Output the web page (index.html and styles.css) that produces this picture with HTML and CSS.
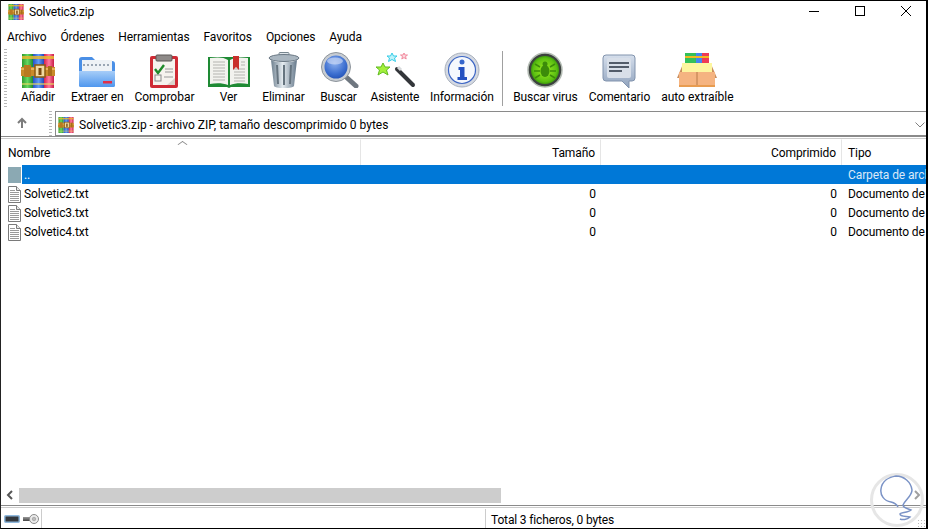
FILE: index.html
```html
<!DOCTYPE html>
<html lang="es">
<head>
<meta charset="utf-8">
<title>Solvetic3.zip</title>
<link rel="stylesheet" href="styles.css">
</head>
<body>
<svg class="defs" width="0" height="0" aria-hidden="true">
  <defs>
    <linearGradient id="gGreen" x1="0" x2="1" y1="0" y2="0"><stop offset="0" stop-color="#2e9a2e"/><stop offset=".5" stop-color="#66d860"/><stop offset="1" stop-color="#1f8a30"/></linearGradient>
    <linearGradient id="gBlue" x1="0" x2="1" y1="0" y2="0"><stop offset="0" stop-color="#2850c8"/><stop offset=".5" stop-color="#5f9cf6"/><stop offset="1" stop-color="#2448b8"/></linearGradient>
    <linearGradient id="gRed" x1="0" x2="1" y1="0" y2="0"><stop offset="0" stop-color="#d8204c"/><stop offset=".5" stop-color="#ff7ca0"/><stop offset="1" stop-color="#c81c48"/></linearGradient>
    <linearGradient id="gFolder" x1="0" x2="0" y1="0" y2="1"><stop offset="0" stop-color="#a7cdf8"/><stop offset="1" stop-color="#4f97ee"/></linearGradient>
    <linearGradient id="gCan" x1="0" x2="1" y1="0" y2="0"><stop offset="0" stop-color="#6d7f8e"/><stop offset=".45" stop-color="#e4ebf0"/><stop offset="1" stop-color="#65788a"/></linearGradient>
    <radialGradient id="gLens" cx=".45" cy=".35" r=".7"><stop offset="0" stop-color="#8cb0ee"/><stop offset=".6" stop-color="#3d6fd0"/><stop offset="1" stop-color="#1b49ae"/></radialGradient>
    <radialGradient id="gVirus" cx=".5" cy=".5" r=".55"><stop offset="0" stop-color="#a0f020"/><stop offset=".75" stop-color="#5cc012"/><stop offset="1" stop-color="#2f8a08"/></radialGradient>
    <linearGradient id="gBubble" x1="0" x2="0" y1="0" y2="1"><stop offset="0" stop-color="#d6dfec"/><stop offset="1" stop-color="#8fa2bd"/></linearGradient>
    <linearGradient id="gKey" x1="0" x2="0" y1="0" y2="1"><stop offset="0" stop-color="#9a9a9a"/><stop offset="1" stop-color="#444"/></linearGradient>
    <symbol id="rar" viewBox="0 0 34 34">
      <rect x="1" y="0" width="11" height="34" fill="url(#gGreen)"/>
      <rect x="12" y="0" width="11" height="34" fill="url(#gBlue)"/>
      <rect x="23" y="0" width="10" height="34" fill="url(#gRed)"/>
      <rect x="1" y="2" width="32" height="3" fill="#e8b830" opacity=".85"/>
      <rect x="1" y="29" width="32" height="2" fill="#e8d860" opacity=".6"/>
      <rect x="0" y="13" width="34" height="9" fill="#c98a2a"/>
      <rect x="0" y="14" width="34" height="2" fill="#e8b45a"/>
      <rect x="3" y="11" width="7" height="12" fill="#b87a20"/>
      <rect x="14" y="11" width="10" height="12" fill="#f0d9a0" stroke="#8a5a10" stroke-width="1.5"/>
      <rect x="17.5" y="14" width="3" height="7" fill="#7a4a10"/>
      <rect x="27" y="12" width="4" height="10" fill="#a86c18"/>
    </symbol>
    <symbol id="doc" viewBox="0 0 13 17">
      <path d="M.5.5h8l4 4v12H.5z" fill="#fff" stroke="#7a7a7a"/>
      <path d="M8.500.5v4h4" fill="#e8e8e8" stroke="#7a7a7a"/>
      <path d="M2 4.500h5M2 6.500h9M2 8.500h9M2 10.500h9M2 12.500h9M2 14.500h9" stroke="#9a9a9a"/>
    </symbol>
  </defs>
</svg>

<div class="window">
  <header class="titlebar">
    <svg class="title-icon"><use href="#rar"/></svg>
    <span class="title-text">Solvetic3.zip</span>
    <div class="caption">
      <svg class="cap" viewBox="0 0 46 20"><path d="M18 10.500h10" stroke="#000" fill="none"/></svg>
      <svg class="cap" viewBox="0 0 46 20"><rect x="18.500" y="5.500" width="9" height="9" stroke="#000" fill="none"/></svg>
      <svg class="cap" viewBox="0 0 46 20"><path d="M18 5l10 10M28 5L18 15" stroke="#000" fill="none"/></svg>
    </div>
  </header>

  <nav class="menubar">
    <span class="menu-item">Archivo</span>
    <span class="menu-item">Órdenes</span>
    <span class="menu-item">Herramientas</span>
    <span class="menu-item">Favoritos</span>
    <span class="menu-item">Opciones</span>
    <span class="menu-item">Ayuda</span>
  </nav>

  <div class="toolbar">
    <div class="gripper"></div>
    <div class="tools">
      <div class="tool tool-add">
        <svg class="tool-icon" viewBox="0 0 44 36"><use href="#rar" x="5" y="2" width="34" height="34"/></svg>
        <span>Añadir</span>
      </div>
      <div class="tool tool-extract">
        <svg class="tool-icon" viewBox="0 0 44 36">
          <path d="M4 8a3 3 0 0 1 3-3h10l4 4h16a3 3 0 0 1 3 3v21a2 2 0 0 1-2 2H6a2 2 0 0 1-2-2z" fill="#4a8fe6"/>
          <rect x="7" y="8" width="30" height="13" fill="#eef2f6"/>
          <path d="M8 13h28" stroke="#9aa6b4" stroke-dasharray="2 2" stroke-width="2"/>
          <path d="M4 19h36v14a2 2 0 0 1-2 2H6a2 2 0 0 1-2-2z" fill="url(#gFolder)"/>
          <rect x="28" y="29" width="9" height="2.500" fill="#e0304a"/>
        </svg>
        <span>Extraer en</span>
      </div>
      <div class="tool tool-test">
        <svg class="tool-icon" viewBox="0 0 44 36">
          <rect x="8" y="4" width="28" height="32" rx="2" fill="#cf2b35"/>
          <rect x="11" y="7" width="22" height="26" fill="#f6f3ee"/>
          <rect x="14" y="3" width="16" height="6" rx="1" fill="#8e8a88" stroke="#5a5654"/>
          <path d="M13 17l3 4 6-8" stroke="#1f8a2a" stroke-width="2.400" fill="none"/>
          <path d="M23 17h8M23 20h8M22 25h9" stroke="#9a9a9a"/>
          <rect x="13" y="23" width="6" height="6" fill="none" stroke="#8a8a8a"/>
          <path d="M25 33l8-7v7z" fill="#d9d4cc"/>
        </svg>
        <span>Comprobar</span>
      </div>
      <div class="tool tool-view">
        <svg class="tool-icon" viewBox="0 0 44 36">
          <path d="M1 5h42v30H24l-2 1-2-1H1z" fill="#1e8a34"/>
          <path d="M3 6c7-1 14-1 18 2v25c-5-2-12-2-18-1z" fill="#f2f2ee"/>
          <path d="M41 6c-7-1-14-1-18 2v25c5-2 12-2 18-1z" fill="#f2f2ee"/>
          <path d="M6 10h12M6 13h12M6 16h12M6 19h12M6 22h12M6 25h12M6 28h12M27 17h11M27 20h11M27 23h11M27 26h11M27 29h11M34 10h4M34 13h4" stroke="#b4b4b0"/>
          <path d="M26 4h6v14l-3-3-3 3z" fill="#c8302c"/>
        </svg>
        <span>Ver</span>
      </div>
      <div class="tool tool-delete">
        <svg class="tool-icon" viewBox="0 0 44 36">
          <rect x="17" y=".5" width="10" height="3" rx="1" fill="#dfe5ea" stroke="#77868f"/>
          <ellipse cx="22" cy="6" rx="15" ry="3.500" fill="#aab6c0" stroke="#6a7884"/>
          <path d="M9 8l3 26a10 2 0 0 0 20 0l3-26a14 3.500 0 0 1-26 0z" fill="url(#gCan)"/>
          <path d="M15 13l1 19M22 13v20M29 13l-1 19" stroke="#66747f" stroke-width="2"/>
        </svg>
        <span>Eliminar</span>
      </div>
      <div class="tool tool-find">
        <svg class="tool-icon" viewBox="0 0 44 36">
          <path d="M28 24l11 10" stroke="#6f7780" stroke-width="5" stroke-linecap="round"/>
          <circle cx="19" cy="15" r="13" fill="url(#gLens)" stroke="#c7ccd2" stroke-width="3"/>
          <circle cx="19" cy="15" r="14.500" fill="none" stroke="#8d949b"/>
          <ellipse cx="18" cy="9" rx="8" ry="3.500" fill="#cfdcf6" opacity=".65"/>
        </svg>
        <span>Buscar</span>
      </div>
      <div class="tool tool-wizard">
        <svg class="tool-icon" viewBox="0 0 44 36">
          <path d="M24 17l16 16" stroke="#33363a" stroke-width="4" stroke-linecap="round"/>
          <path d="M25 15l3 3" stroke="#d8dadc" stroke-width="3"/>
          <path d="M10 11l2 4 5 0-3.500 3 1.500 5-5-3-5 3 1.500-5L3 15l5 0z" fill="#a3f03c" stroke="#62bc20"/>
          <path d="M19 1l1.500 3 3.500 0-2.500 2 1 3.500-3.500-2-3.500 2 1-3.500L14 4l3.500 0z" fill="#bff3fa" stroke="#36cde8"/>
          <path d="M31 1l1 2 2.500 0-2 1.500.7 2.500-2.200-1.400-2.200 1.400.7-2.500-2-1.500 2.500 0z" fill="#fbd8de" stroke="#f28a9e"/>
        </svg>
        <span>Asistente</span>
      </div>
      <div class="tool tool-info">
        <svg class="tool-icon" viewBox="0 0 44 36">
          <circle cx="22" cy="18" r="17" fill="#d4d9e2" stroke="#a8b0bc"/>
          <circle cx="22" cy="18" r="13.500" fill="#f5f8fd" stroke="#3d66c4" stroke-width="1.200"/>
          <circle cx="22" cy="10" r="2.500" fill="#3566cc"/>
          <path d="M18.500 15h6v10H27v3h-9.500v-3h2.500v-7h-1.500z" fill="#2350c0"/>
        </svg>
        <span>Información</span>
      </div>
      <div class="tool-sep"></div>
      <div class="tool tool-virus">
        <svg class="tool-icon" viewBox="0 0 44 36">
          <circle cx="22" cy="18" r="17" fill="#3c423e" stroke="#b4bcb4" stroke-width="1.500"/>
          <circle cx="22" cy="18" r="14" fill="url(#gVirus)"/>
          <ellipse cx="22" cy="19" rx="4.500" ry="6" fill="#3c8c0a"/>
          <circle cx="22" cy="12" r="2.500" fill="#3c8c0a"/>
          <path d="M17 15l-5-3M27 15l5-3M17 19h-6M27 19h6M17 23l-5 3M27 23l5 3" stroke="#3c8c0a" stroke-width="1.500"/>
        </svg>
        <span>Buscar virus</span>
      </div>
      <div class="tool tool-comment">
        <svg class="tool-icon" viewBox="0 0 44 36">
          <path d="M9 3h26a3 3 0 0 1 3 3v20a3 3 0 0 1-3 3h-3v7l-7-7H9a3 3 0 0 1-3-3V6a3 3 0 0 1 3-3z" fill="url(#gBubble)" stroke="#8193ad"/>
          <rect x="10" y="6" width="24" height="20" rx="2" fill="#d8dfe9"/>
          <path d="M12 11h20M12 15h20M12 19h13" stroke="#525c6a" stroke-width="2"/>
        </svg>
        <span>Comentario</span>
      </div>
      <div class="tool tool-sfx">
        <svg class="tool-icon" viewBox="0 0 44 36">
          <rect x="10" y="1" width="11" height="14" fill="#34c05a"/>
          <rect x="21" y="1" width="11" height="14" fill="#4486f0"/>
          <rect x="27" y="1" width="7" height="14" fill="#ee3a56"/>
          <rect x="10" y="4" width="24" height="2" fill="#f0b820"/>
          <path d="M8 12h28l6 14H2z" fill="#c98e5e"/>
          <rect x="7" y="11" width="30" height="9" fill="#fdf6a0"/>
          <rect x="4" y="20" width="36" height="15" fill="#f5b481"/>
          <path d="M22 20v15" stroke="#b87a48"/>
          <path d="M4 34h36" stroke="#e89c50" stroke-width="2"/>
        </svg>
        <span>auto extraíble</span>
      </div>
    </div>
  </div>

  <div class="addressbar">
    <div class="up-wrap">
      <div class="gripper gripper-addr"></div>
      <svg class="up" viewBox="0 0 12 12"><path d="M6 11V2M2 6l4-4 4 4" stroke="#7c7c7c" stroke-width="2" fill="none"/></svg>
    </div>
    <div class="gripper gripper-addr"></div>
    <div class="combo">
      <svg class="combo-icon"><use href="#rar"/></svg>
      <span class="combo-text">Solvetic3.zip - archivo ZIP, tamaño descomprimido 0 bytes</span>
      <svg class="chev" viewBox="0 0 10 6"><path d="M.5.5L5 5 9.500.5" stroke="#808080" fill="none"/></svg>
    </div>
  </div>

  <main class="list">
    <div class="row head">
      <div class="cell name">Nombre<span class="sort"></span></div>
      <div class="cell num">Tamaño</div>
      <div class="cell num">Comprimido</div>
      <div class="cell type">Tipo</div>
    </div>
    <div class="row item selected">
      <div class="cell name"><span class="up-folder"></span><span class="label">..</span></div>
      <div class="cell num"></div>
      <div class="cell num"></div>
      <div class="cell type">Carpeta de archivos</div>
    </div>
    <div class="row item">
      <div class="cell name"><svg class="doc-icon"><use href="#doc"/></svg><span class="label">Solvetic2.txt</span></div>
      <div class="cell num">0</div><div class="cell num">0</div>
      <div class="cell type">Documento de texto</div>
    </div>
    <div class="row item">
      <div class="cell name"><svg class="doc-icon"><use href="#doc"/></svg><span class="label">Solvetic3.txt</span></div>
      <div class="cell num">0</div><div class="cell num">0</div>
      <div class="cell type">Documento de texto</div>
    </div>
    <div class="row item">
      <div class="cell name"><svg class="doc-icon"><use href="#doc"/></svg><span class="label">Solvetic4.txt</span></div>
      <div class="cell num">0</div><div class="cell num">0</div>
      <div class="cell type">Documento de texto</div>
    </div>
  </main>

  <div class="hscroll">
    <svg class="arrow" viewBox="0 0 8 10"><path d="M6 1L2 5l4 4" stroke="#555" stroke-width="2" fill="none"/></svg>
    <div class="track"><div class="thumb"></div></div>
    <svg class="arrow" viewBox="0 0 8 10"><path d="M2 1l4 4-4 4" stroke="#a0a0a0" stroke-width="2" fill="none"/></svg>
  </div>

  <footer class="statusbar">
    <div class="status-icons">
      <svg class="st-drive" viewBox="0 0 16 8"><rect x=".75" y=".75" width="14.500" height="6.500" rx="1" fill="#33373c" stroke="#8fb8dc" stroke-width="1.500"/></svg>
      <svg class="st-key" viewBox="0 0 16 10"><rect x="0" y="3" width="9" height="4" fill="url(#gKey)"/><circle cx="11" cy="5" r="4.500" fill="#ececec" stroke="#8a8a8a"/><circle cx="11" cy="5" r="1.800" fill="#bbb" stroke="#888" stroke-width=".5"/></svg>
    </div>
    <div class="status-mid"></div>
    <div class="status-total">Total 3 ficheros, 0 bytes</div>
  </footer>

  <svg class="watermark" viewBox="0 0 58 59">
    <circle cx="27" cy="30" r="25.500" fill="none" stroke="#e6e6e6" stroke-width="3"/>
    <path d="M28 37C27 35 25 33 21 32C14 31 10 25 11 19C12 11 19 7 26 6C34 6 41 12 42 20C42 26 35 30 33 35C33 38 36 38 41 40C38 43 30 42 30 44C30 47 37 46 40 47C37 50 32 50 30 49" fill="none" stroke="#7b93c6" stroke-width="1.500"/>
  </svg>
  <div class="size-grip"></div>
</div>
</body>
</html>
```

FILE: styles.css
```css
* { box-sizing: border-box; }
html, body { margin: 0; padding: 0; }
body {
  width: 928px;
  height: 529px;
  overflow: hidden;
  background: #fff;
  color: #000;
  font-family: Roboto, "Noto Sans", sans-serif;
  font-size: 12px;
  line-height: 16px;
}
.defs { position: absolute; }
.window {
  position: relative;
  width: 928px;
  height: 529px;
  display: flex;
  flex-direction: column;
  border-top: 1px solid #000;
  border-left: 1px solid #222;
  border-bottom: 1px solid #000;
  border-right: 2px solid #000;
  overflow: hidden;
}
.titlebar {
  height: 22px;
  display: flex;
  align-items: center;
  padding-left: 7px;
  flex: none;
}
.title-icon { width: 16px; height: 16px; margin-right: 5px; }
.title-text { flex: 1; letter-spacing: -.2px; }
.caption { display: flex; margin-right: -3px; align-self: flex-start; }
.cap { width: 46px; height: 20px; }
.menubar {
  height: 24px;
  padding: 4px 0 0 0;
  margin-left: -1px;
  display: flex;
  flex: none;
  letter-spacing: -.1px;
}
.menu-item { padding: 0 7px; height: 20px; line-height: 20px; }
.toolbar {
  height: 62px;
  display: flex;
  flex: none;
}
.gripper {
  width: 3px;
  margin: 2px 0 2px 3px;
  flex: none;
  background-image: linear-gradient(#b8b8b8 50%, transparent 50%);
  background-size: 3px 3px;
}
.tools { display: flex; margin-left: 3.5px; }
.tool {
  min-width: 55px;
  padding: 5px 5.5px 0;
  display: flex;
  flex-direction: column;
  align-items: center;
  white-space: nowrap;
  height: 62px;
}
.tool-icon { width: 44px; height: 36px; flex: none; margin-bottom: 1px; }
.tool span { line-height: 16px; letter-spacing: -.1px; }
.tool-test { padding-right: 6.5px; }
.tool-test span, .tool-sfx span { letter-spacing: 0; }
.tool-wizard { padding-left: 4.5px; }
.tool-wizard span { letter-spacing: -.2px; }
.tool-sep { width: 1px; margin: 4px 5px 0 2.5px; background: #a0a0a0; height: 55px; flex: none; }
.addressbar {
  height: 28px;
  display: flex;
  align-items: stretch;
  flex: none;
  border-bottom: 1px solid #8a8a8a;
}
.up-wrap { width: 45px; display: flex; align-items: center; flex: none; }
.up { width: 12px; height: 12px; margin-left: 9px; }
.gripper-addr { margin: 2px 0 0 3px; }
.combo {
  flex: 1;
  margin: 2px 0 0 3px;
  border: 1px solid #8a8a8a;
  border-right: 0;
  display: flex;
  align-items: center;
  padding: 2px 0 0 2px;
  min-width: 0;
}
.combo-icon { width: 16px; height: 16px; margin-right: 5px; flex: none; }
.combo-text { flex: 1; }
.chev { width: 10px; height: 6px; margin-right: 1px; }
.list { flex: 1; margin-top: 1px; border-top: 1px solid #ccc; overflow: hidden; min-height: 0; }
.row {
  display: grid;
  grid-template-columns: 360px 240px 241px 1fr;
  height: 19px;
  line-height: 19px;
}
.head { height: 26px; line-height: 24px; }
.head .cell { border-right: 1px solid #e5e5e5; border-top: 1px solid #fff; position: relative; }
.head .type { border-right: 0; }
.cell { white-space: nowrap; overflow: hidden; padding: 0 5px 0 7px; display: flex; align-items: center; letter-spacing: -.1px; }
.item .cell { padding-top: 1px; }
.num { justify-content: flex-end; }
.type { padding-left: 6px; }
.sort {
  position: absolute;
  left: 178px;
  top: 1px;
  width: 7px;
  height: 7px;
  border-left: 1px solid #888;
  border-top: 1px solid #888;
  transform: scaleY(.7) rotate(45deg);
}
.selected { color: #fff; }
.selected .num, .selected .type { background: #0078d7; }
.selected .type { color: #dbe9f7; }
.selected .name { background: linear-gradient(90deg, #fff 21px, #0078d7 21px); }
.up-folder { width: 13px; height: 16px; background: #8ba9b3; flex: none; margin-right: 3px; }
.doc-icon { width: 13px; height: 17px; flex: none; margin-right: 3px; }
.hscroll {
  height: 16px;
  display: flex;
  align-items: center;
  flex: none;
  margin-bottom: 2px;
}
.arrow { width: 8px; height: 10px; margin: 0 5px; flex: none; }
.track { flex: 1; height: 15px; }
.thumb { width: 482px; height: 15px; background: #cdcdcd; }
.statusbar {
  height: 23px;
  display: flex;
  flex: none;
  border-top: 1px solid #8a8a8a;
  box-shadow: inset 0 1px 0 #fff, inset 0 2px 0 #ccc;
  align-items: stretch;
}
.status-icons { width: 41px; display: flex; align-items: center; gap: 3px; padding: 0 0 0 3px; border-right: 1px solid #ccc; margin-top: 3px; }
.st-drive { width: 16px; height: 8px; }
.st-key { width: 16px; height: 10px; }
.status-mid { width: 444px; border-right: 1px solid #ccc; margin-top: 3px; }
.status-total { padding: 5px 0 0 5px; line-height: 18px; letter-spacing: -.15px; }
.watermark {
  position: absolute;
  right: -2px;
  bottom: -1px;
  width: 58px;
  height: 59px;
}
.size-grip {
  position: absolute;
  right: 0;
  bottom: 0;
  width: 9px;
  height: 9px;
  background-image: radial-gradient(#bbb 1px, transparent 1px);
  background-size: 3px 3px;
}
```
